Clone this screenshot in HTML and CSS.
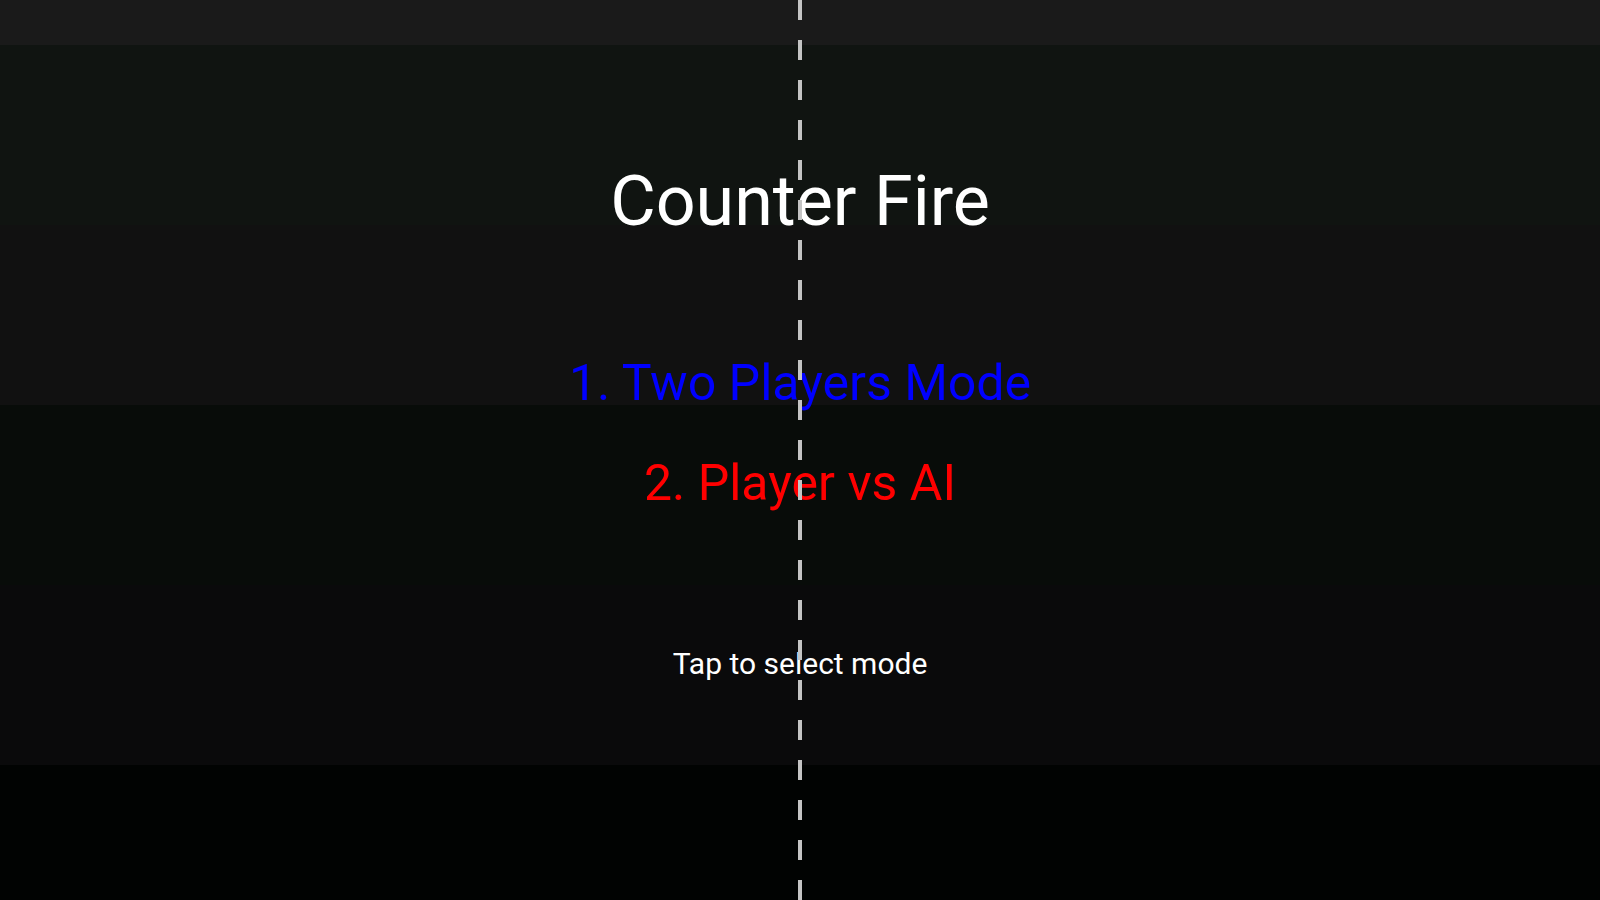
FILE: index.html
```html
<!DOCTYPE html>
<html lang="en">
<head>
<meta charset="utf-8">
<title>Counter Fire</title>
<link rel="stylesheet" href="styles.css">
</head>
<body>
<main class="screen">
  <h1 class="title">Counter Fire</h1>
  <ul class="modes">
    <li class="mode mode-two">1. Two Players Mode</li>
    <li class="mode mode-ai">2. Player vs AI</li>
  </ul>
  <p class="hint">Tap to select mode</p>
  <div class="divider" aria-hidden="true"></div>
</main>
</body>
</html>
```

FILE: styles.css
```css
html, body {
  margin: 0;
  padding: 0;
  background: #010302;
}

.screen {
  position: relative;
  width: 1600px;
  height: 900px;
  overflow: hidden;
  display: flex;
  flex-direction: column;
  align-items: center;
  box-sizing: border-box;
  padding-top: 166px;
  font-family: Roboto, "Liberation Sans", sans-serif;
  background: linear-gradient(to bottom,
    #1a1a1a 0 45px,
    #101411 45px 225px,
    #111111 225px 405px,
    #080c09 405px 585px,
    #0a0a0b 585px 765px,
    #010302 765px 900px);
}

.title {
  margin: 0;
  font-size: 70px;
  line-height: 70px;
  font-weight: 400;
  color: #ffffff;
}

.modes {
  list-style: none;
  margin: 97px 0 0;
  padding: 0;
  display: flex;
  flex-direction: column;
  align-items: center;
}

.mode {
  font-size: 50px;
  line-height: 100px;
}

.mode-two { color: #0000ff; }
.mode-ai { color: #ff0000; }

.hint {
  margin: 116px 0 0;
  font-size: 30px;
  line-height: 30px;
  color: #ffffff;
}

.divider {
  position: absolute;
  top: 0;
  bottom: 0;
  left: 798px;
  width: 4px;
  background: repeating-linear-gradient(to bottom,
    #c4c4c4 0 20px,
    transparent 20px 40px);
}
```
